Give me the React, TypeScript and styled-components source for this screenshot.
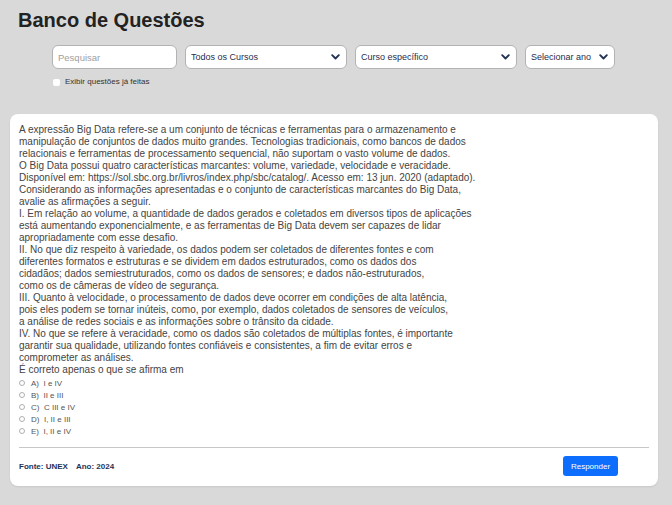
import React from "react";
import styled, { createGlobalStyle } from "styled-components";

const Global = createGlobalStyle`
  html, body { margin: 0; padding: 0; background: #d9d9d9; }
  body { font-family: "Liberation Sans", Arial, sans-serif; }
  * { box-sizing: border-box; }
`;

const Page = styled.div`
  width: 672px;
  min-height: 505px;
  background: #d9d9d9;
  padding: 8px 14px 20px 10px;
`;

const Title = styled.h1`
  margin: 0 0 0 8px;
  font-size: 20px;
  line-height: 24px;
  font-weight: 700;
  color: #222;
`;

const Filters = styled.div`
  display: flex;
  gap: 8px;
  margin: 13px 0 0 42px;
`;

const Field = styled.div<{ $w: number }>`
  width: ${(p) => p.$w}px;
  height: 24px;
  background: #fff;
  border: 1px solid #b3b3b3;
  border-radius: 6px;
  display: flex;
  align-items: center;
  justify-content: space-between;
  padding: 0 6px 0 5px;
  font-family: "Liberation Sans", Arial, sans-serif;
  font-size: 9px;
  color: #1f2d4d;
  white-space: nowrap;
`;

const Placeholder = styled.span`
  color: #a0a0a0;
  font-size: 9.5px;
`;

const Chevron = () => (
  <svg width="9" height="6" viewBox="0 0 9 6">
    <path d="M1.2 1.2 L4.5 4.5 L7.8 1.2" fill="none" stroke="#243352" strokeWidth="1.9" strokeLinecap="round" strokeLinejoin="round" />
  </svg>
);

const CheckRow = styled.label`
  display: flex;
  align-items: center;
  gap: 5px;
  margin: 8px 0 0 43px;
  font-size: 8px;
  line-height: 10px;
  color: #333;
`;

const Box = styled.span`
  width: 7px;
  height: 7px;
  background: #fff;
  border-radius: 2px;
  display: inline-block;
`;

const Card = styled.div`
  margin-top: 27px;
  background: #fff;
  border-radius: 8px;
  padding: 10px 9px 10px 9px;
  box-shadow: 0 1px 2px rgba(0, 0, 0, 0.08);
`;

const Statement = styled.div`
  font-size: 10px;
  line-height: 12px;
  color: #444;
  white-space: pre-line;
`;

const Options = styled.div`
  margin-top: 1px;
  display: flex;
  flex-direction: column;
`;

const Option = styled.label`
  display: flex;
  align-items: center;
  height: 12px;
  font-size: 8px;
  color: #555;
`;

const Radio = styled.span`
  width: 6px;
  height: 6px;
  border: 1px solid #b0b0b0;
  border-radius: 50%;
  margin-right: 6px;
  display: inline-block;
`;

const Divider = styled.hr`
  border: 0;
  border-top: 1px solid #c8c8c8;
  margin: 10px 0 0 0;
`;

const Footer = styled.div`
  display: flex;
  align-items: center;
  justify-content: space-between;
  padding: 8px 31px 0 0;
`;

const Meta = styled.div`
  font-size: 8px;
  font-weight: 700;
  color: #1f3358;
  display: flex;
  gap: 8px;
`;

const Button = styled.button`
  background: #0d6efd;
  color: #fff;
  border: 0;
  border-radius: 3px;
  font-family: "Liberation Sans", Arial, sans-serif;
  font-size: 8px;
  height: 20px;
  width: 55px;
  padding: 0;
`;

const text = `A expressão Big Data refere-se a um conjunto de técnicas e ferramentas para o armazenamento e
manipulação de conjuntos de dados muito grandes. Tecnologias tradicionais, como bancos de dados
relacionais e ferramentas de processamento sequencial, não suportam o vasto volume de dados.
O Big Data possui quatro características marcantes: volume, variedade, velocidade e veracidade.
Disponível em: https://sol.sbc.org.br/livros/index.php/sbc/catalog/. Acesso em: 13 jun. 2020 (adaptado).
Considerando as informações apresentadas e o conjunto de características marcantes do Big Data,
avalie as afirmações a seguir.
I. Em relação ao volume, a quantidade de dados gerados e coletados em diversos tipos de aplicações
está aumentando exponencialmente, e as ferramentas de Big Data devem ser capazes de lidar
apropriadamente com esse desafio.
II. No que diz respeito à variedade, os dados podem ser coletados de diferentes fontes e com
diferentes formatos e estruturas e se dividem em dados estruturados, como os dados dos
cidadãos; dados semiestruturados, como os dados de sensores; e dados não-estruturados,
como os de câmeras de vídeo de segurança.
III. Quanto à velocidade, o processamento de dados deve ocorrer em condições de alta latência,
pois eles podem se tornar inúteis, como, por exemplo, dados coletados de sensores de veículos,
a análise de redes sociais e as informações sobre o trânsito da cidade.
IV. No que se refere à veracidade, como os dados são coletados de múltiplas fontes, é importante
garantir sua qualidade, utilizando fontes confiáveis e consistentes, a fim de evitar erros e
comprometer as análises.
É correto apenas o que se afirma em`;

const options = [
  ["A)", "I e IV"],
  ["B)", "II e III"],
  ["C)", "C III e IV"],
  ["D)", "I, II e III"],
  ["E)", "I, II e IV"],
];

export default function App() {
  return (
    <>
      <Global />
      <Page>
        <Title>Banco de Questões</Title>
        <Filters>
          <Field $w={125}>
            <Placeholder>Pesquisar</Placeholder>
          </Field>
          <Field $w={162}>
            <span>Todos os Cursos</span>
            <Chevron />
          </Field>
          <Field $w={162}>
            <span>Curso específico</span>
            <Chevron />
          </Field>
          <Field $w={90}>
            <span>Selecionar ano</span>
            <Chevron />
          </Field>
        </Filters>
        <CheckRow>
          <Box />
          Exibir questões já feitas
        </CheckRow>
        <Card>
          <Statement>{text}</Statement>
          <Options>
            {options.map(([l, t]) => (
              <Option key={l}>
                <Radio />
                {l}&nbsp;&nbsp;{t}
              </Option>
            ))}
          </Options>
          <Divider />
          <Footer>
            <Meta>
              <span>Fonte: UNEX</span>
              <span>Ano: 2024</span>
            </Meta>
            <Button>Responder</Button>
          </Footer>
        </Card>
      </Page>
    </>
  );
}
